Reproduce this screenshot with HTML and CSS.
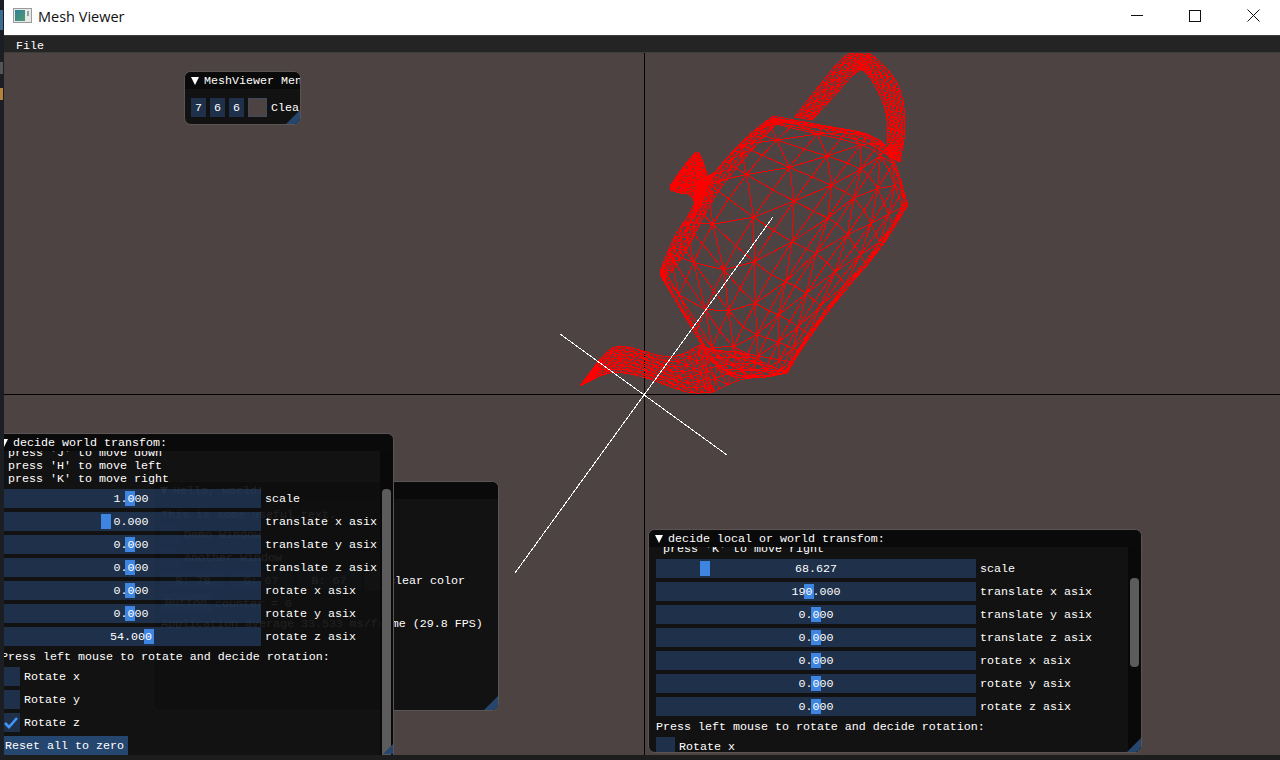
FILE: index.html
```html
<!DOCTYPE html>
<html lang="en">
<head>
    <meta charset="UTF-8">
    <title>Mesh Viewer</title>
    <link rel="stylesheet" href="styles.css">
</head>
<body>
    <div class="desktop-strip">
        <span class="strip-blue"></span>
        <span class="strip-gray"></span>
        <span class="strip-orange"></span>
    </div>

    <div class="app">
        <header class="titlebar">
            <svg class="app-icon" width="19" height="15" viewBox="0 0 19 15">
                <defs>
                    <linearGradient id="icon-fill" x1="0" y1="0" x2="1" y2="1">
                        <stop offset="0" stop-color="#2f7f9c"/>
                        <stop offset="1" stop-color="#4f9a6e"/>
                    </linearGradient>
                </defs>
                <rect x="0.5" y="0.5" width="18" height="14" fill="#e8e8e8" stroke="#9a9a9a"/>
                <rect x="2" y="2" width="10" height="11" fill="url(#icon-fill)"/>
                <rect x="14" y="3" width="2" height="5" fill="#8fa5a0"/>
            </svg>
            <span class="app-title">Mesh Viewer</span>
            <div class="window-controls">
                <svg width="12" height="12" viewBox="0 0 12 12"><path d="M0 5.5H12" stroke="#111"/></svg>
                <svg width="12" height="12" viewBox="0 0 12 12"><rect x="0.5" y="0.5" width="11" height="11" fill="none" stroke="#111"/></svg>
                <svg width="13" height="13" viewBox="0 0 13 13"><path d="M0.5 0.5L12.5 12.5M12.5 0.5L0.5 12.5" stroke="#111"/></svg>
            </div>
        </header>

        <nav class="menubar"><span>File</span></nav>

        <main class="canvas">
            <svg class="scene" id="scene" width="1276" height="702" viewBox="4 53 1276 702">
                <path d="M644.5 53V755M4 394.5H1280" stroke="#000" fill="none"/>
                <path id="mesh" d="" stroke="#ff0000" fill="none"/>
                <path d="M773 217L515 573M560 334L727 455" stroke="#fff" fill="none"/>
            </svg>

            <section class="window window-menu">
                <div class="win-title"><i class="arrow"></i><span class="win-label">MeshViewer Menu</span></div>
                <div class="swatch-row">
                    <span class="frame small"><span>7</span></span>
                    <span class="frame small"><span>6</span></span>
                    <span class="frame small"><span>6</span></span>
                    <span class="color-box"></span>
                    <span class="nudge">Clear color</span>
                </div>
                <i class="grip"></i>
            </section>

            <section class="window window-hello">
                <div class="win-title"><i class="arrow"></i><span class="win-label">Hello, world!</span></div>
                <div class="win-body hello-body">
                    <p>This is some useful text.</p>
                    <div class="check-row"><span class="check"></span><span>Demo Window</span></div>
                    <div class="check-row"><span class="check"></span><span>Another Window</span></div>
                    <div class="slider-row">
                        <span class="frame color-part"><span>R: 78</span></span>
                        <span class="frame color-part"><span>G: 67</span></span>
                        <span class="frame color-part"><span>B: 67</span></span>
                        <span class="color-box"></span>
                        <label>clear color</label>
                    </div>
                    <div class="check-row"><span class="plain-button">Button</span><span>counter = 0</span></div>
                    <p>Application average 33.533 ms/frame (29.8 FPS)</p>
                </div>
                <i class="grip"></i>
            </section>

            <section class="window window-world">
                <div class="win-title"><i class="arrow"></i><span class="win-label">decide world transfom:</span></div>
                <div class="win-body">
                    <pre class="help-text"> press 'J' to move down
 press 'H' to move left
 press 'K' to move right</pre>
                    <div class="slider-row"><div class="slider"><i class="grab" style="left: 124px"></i><span>1.000</span></div><label>scale</label></div>
                    <div class="slider-row"><div class="slider"><i class="grab" style="left: 100px"></i><span>0.000</span></div><label>translate x asix</label></div>
                    <div class="slider-row"><div class="slider"><i class="grab" style="left: 124px"></i><span>0.000</span></div><label>translate y asix</label></div>
                    <div class="slider-row"><div class="slider"><i class="grab" style="left: 124px"></i><span>0.000</span></div><label>translate z asix</label></div>
                    <div class="slider-row"><div class="slider"><i class="grab" style="left: 124px"></i><span>0.000</span></div><label>rotate x asix</label></div>
                    <div class="slider-row"><div class="slider"><i class="grab" style="left: 124px"></i><span>0.000</span></div><label>rotate y asix</label></div>
                    <div class="slider-row"><div class="slider"><i class="grab" style="left: 143px"></i><span>54.000</span></div><label>rotate z asix</label></div>
                    <p>Press left mouse to rotate and decide rotation:</p>
                    <div class="check-row"><span class="check"></span><span>Rotate x</span></div>
                    <div class="check-row"><span class="check"></span><span>Rotate y</span></div>
                    <div class="check-row">
                        <span class="check">
                            <svg width="19" height="19" viewBox="0 0 19 19"><path d="M4 10L8 14L16 5" fill="none" stroke="#4296fa" stroke-width="2.6"/></svg>
                        </span>
                        <span>Rotate z</span>
                    </div>
                    <div class="reset-button"><span>Reset all to zero</span></div>
                </div>
                <div class="scroll-track"><i class="scroll-thumb"></i></div>
                <i class="grip"></i>
            </section>

            <section class="window window-local">
                <div class="win-title"><i class="arrow"></i><span class="win-label">decide local or world transfom:</span></div>
                <div class="win-body">
                    <pre class="help-text"> press 'K' to move right</pre>
                    <div class="slider-row"><div class="slider"><i class="grab" style="left: 44px"></i><span>68.627</span></div><label>scale</label></div>
                    <div class="slider-row"><div class="slider"><i class="grab" style="left: 148px"></i><span>190.000</span></div><label>translate x asix</label></div>
                    <div class="slider-row"><div class="slider"><i class="grab" style="left: 155px"></i><span>0.000</span></div><label>translate y asix</label></div>
                    <div class="slider-row"><div class="slider"><i class="grab" style="left: 155px"></i><span>0.000</span></div><label>translate z asix</label></div>
                    <div class="slider-row"><div class="slider"><i class="grab" style="left: 155px"></i><span>0.000</span></div><label>rotate x asix</label></div>
                    <div class="slider-row"><div class="slider"><i class="grab" style="left: 155px"></i><span>0.000</span></div><label>rotate y asix</label></div>
                    <div class="slider-row"><div class="slider"><i class="grab" style="left: 155px"></i><span>0.000</span></div><label>rotate z asix</label></div>
                    <p>Press left mouse to rotate and decide rotation:</p>
                    <div class="check-row"><span class="check"></span><span>Rotate x</span></div>
                </div>
                <div class="scroll-track"><i class="scroll-thumb"></i></div>
                <i class="grip"></i>
            </section>
        </main>
    </div>

    <script src="teapot.js"></script>
</body>
</html>
```

FILE: styles.css
```css
* {
    box-sizing: border-box;
}

html, body {
    height: 100%;
}

body {
    margin: 0;
    display: flex;
    overflow: hidden;
    background-color: #1d1d1d;
    color: #fff;
    font-family: "Liberation Mono", monospace;
    font-size: 11.67px;
    line-height: 13px;
}

p, pre {
    margin: 0;
    font: inherit;
    white-space: pre;
}

/* liberation mono sits a pixel higher than the imgui font */
p, label, .nudge, .win-label, .menubar span, .slider span, .frame span,
.check-row > span:last-child, .reset-button span {
    transform: translateY(1px);
}

/* bit of the desktop behind the window */
.desktop-strip {
    flex: 0 0 4px;
    display: flex;
    flex-direction: column;
    background-color: #1b1f24;
}

.desktop-strip span {
    display: block;
    width: 3px;
}

.strip-blue {
    height: 20px;
    margin-top: 10px;
    background-color: #3d6c92;
}

.strip-gray {
    height: 12px;
    margin-top: 32px;
    background-color: #555;
}

.strip-orange {
    height: 12px;
    margin-top: 14px;
    background-color: #b5813c;
}

.app {
    flex: 1;
    display: flex;
    flex-direction: column;
    min-width: 0;
}

.titlebar {
    flex: 0 0 35px;
    display: flex;
    align-items: center;
    padding: 0 0 4px 9px;
    background-color: #fff;
    color: #111;
}

.app-title {
    margin: 2px 0 0 6px;
    font-family: "Open Sans", sans-serif;
    font-size: 14.5px;
}

.window-controls {
    display: flex;
    align-items: center;
    gap: 46px;
    margin-left: auto;
    padding-right: 20px;
}

.menubar {
    flex: 0 0 18px;
    padding: 3px 0 0 12px;
    background-color: #242424;
    border-top: 1px solid #3c3c3c;
    border-bottom: 1px solid #3c3c3c;
}

.menubar span {
    display: block;
}

.canvas {
    position: relative;
    flex: 0 0 702px;
    overflow: hidden;
    background-color: #4e4343;
}

.scene {
    position: absolute;
    top: 0;
    left: 0;
    shape-rendering: crispEdges;
}

/* imgui style windows, placed freely over the viewport */
.window {
    position: absolute;
    overflow: hidden;
    background-color: rgba(15, 15, 15, 0.93);
    border: 1px solid #5a5454;
    border-radius: 7px;
}

.window-menu {
    left: 180px;
    top: 18px;
    width: 117px;
    height: 54px;
}

.window-hello {
    left: 149px;
    top: 428px;
    width: 346px;
    height: 230px;
}

.window-world {
    left: -11px;
    top: 380px;
    width: 401px;
    height: 340px;
}

.window-local {
    left: 644px;
    top: 476px;
    width: 494px;
    height: 224px;
}

.win-title {
    display: flex;
    align-items: center;
    height: 17px;
    background-color: #0a0a0a;
    white-space: nowrap;
}

.arrow {
    flex: none;
    width: 0;
    height: 0;
    margin-left: 6px;
    border-left: 4.5px solid transparent;
    border-right: 4.5px solid transparent;
    border-top: 8px solid #fff;
}

.win-label {
    margin-left: 5px;
}

.win-body {
    display: flex;
    flex-direction: column;
    gap: 4px;
    height: 100%;
    padding-left: 7px;
    overflow: hidden;
}

.hello-body {
    padding-top: 9px;
}

.help-text {
    flex: none;
    margin-top: -4px;
    margin-bottom: -1px;
}

.slider-row, .check-row {
    flex: none;
    display: flex;
    align-items: center;
    gap: 4px;
    height: 19px;
}

.slider {
    position: relative;
    display: flex;
    align-items: center;
    justify-content: center;
    height: 19px;
    background-color: rgba(41, 74, 122, 0.54);
}

.window-world .slider {
    flex: 0 0 260px;
}

.window-local .slider {
    flex: 0 0 320px;
}

.grab {
    position: absolute;
    top: 2px;
    width: 10px;
    height: 15px;
    background-color: #3d85e0;
}

.check {
    flex: 0 0 19px;
    height: 19px;
    background-color: rgba(41, 74, 122, 0.54);
}

.check svg {
    display: block;
}

.frame {
    display: flex;
    align-items: center;
    justify-content: center;
    height: 19px;
    background-color: rgba(41, 74, 122, 0.54);
}

.frame.small {
    flex: 0 0 15px;
}

.color-part {
    flex: 0 0 64px;
}

.color-box {
    flex: 0 0 19px;
    height: 19px;
    background-color: #4e4343;
    outline: 1px solid #3f4a5c;
    outline-offset: -1px;
}

.plain-button {
    display: flex;
    align-items: center;
    height: 19px;
    padding: 0 4px;
    background-color: rgba(66, 150, 250, 0.4);
}

.reset-button {
    flex: none;
    align-self: flex-start;
    height: 19px;
    padding: 3px 4px 0;
    background-color: rgba(66, 150, 250, 0.4);
}

.reset-button span {
    display: block;
}

.swatch-row {
    display: flex;
    align-items: center;
    gap: 4px;
    height: 19px;
    margin-top: 9px;
    padding-left: 6px;
    white-space: nowrap;
}

.scroll-track {
    position: absolute;
    top: 17px;
    right: 0;
    bottom: 0;
    width: 13px;
    background-color: #090909;
}

.scroll-thumb {
    position: absolute;
    left: 2px;
    width: 9px;
    background-color: #5c5c5c;
    border-radius: 4px;
}

.window-world .scroll-thumb {
    top: 38px;
    height: 300px;
}

.window-local .scroll-thumb {
    top: 31px;
    height: 89px;
}

.grip {
    position: absolute;
    right: 0;
    bottom: 0;
    width: 14px;
    height: 14px;
    background-color: #26466e;
    clip-path: polygon(100% 0, 100% 100%, 0 100%);
}

/* this window runs off the bottom of the viewport */
.window-world .grip {
    bottom: 18px;
    width: 10px;
    height: 10px;
}
```

FILE: teapot.js
```js
// builds the red wireframe, all coordinates are page pixels
let d = "";

function line(a, b) {
    d += `M${a[0].toFixed(1)} ${a[1].toFixed(1)}L${b[0].toFixed(1)} ${b[1].toFixed(1)}`;
}

function lerp(a, b, t) {
    return [a[0] + (b[0] - a[0]) * t, a[1] + (b[1] - a[1]) * t];
}

// catmull-rom through the points, n steps in total
function curve(pts, n) {
    const out = [];
    const segs = pts.length - 1;
    for (let i = 0; i <= n; i++) {
        const f = i / n * segs;
        const k = Math.min(Math.floor(f), segs - 1);
        const t = f - k;
        const p0 = pts[Math.max(k - 1, 0)];
        const p1 = pts[k];
        const p2 = pts[k + 1];
        const p3 = pts[Math.min(k + 2, segs)];
        const c = [0, 1].map(j => 0.5 * (2 * p1[j] + (p2[j] - p0[j]) * t
            + (2 * p0[j] - 5 * p1[j] + 4 * p2[j] - p3[j]) * t * t
            + (3 * p1[j] - p0[j] - 3 * p2[j] + p3[j]) * t * t * t));
        out.push(c);
    }
    return out;
}

function grid(at, nu, nv) {
    for (let i = 0; i <= nu; i++) {
        for (let j = 0; j <= nv; j++) {
            if (i < nu) line(at(i, j), at(i + 1, j));
            if (j < nv) line(at(i, j), at(i, j + 1));
            if (i < nu && j < nv) {
                if ((i + j) % 2 === 0) line(at(i, j), at(i + 1, j + 1));
                else line(at(i + 1, j), at(i, j + 1));
            }
        }
    }
}

function tube(a, b, nu, nv) {
    const ca = curve(a, nu);
    const cb = curve(b, nu);
    grid((i, j) => lerp(ca[i], cb[i], j / nv), nu, nv);
}

function body() {
    const nu = 12;
    const nv = 13;
    const fine = 60;
    const top = curve([[773, 118], [820, 126], [867, 135], [890, 152], [908, 205]], fine);
    const bottom = curve([[660, 274], [693, 330], [722, 372], [755, 378], [787, 373]], fine);
    const left = curve([[773, 118], [735, 150], [700, 195], [680, 232], [660, 274]], fine);
    const right = curve([[908, 205], [877, 253], [837, 300], [803, 347], [787, 373]], fine);
    const su = u => Math.sin(u * Math.PI / 2);
    const sv = v => (1 - Math.cos(v * Math.PI)) / 2;

    grid((i, j) => {
        const u = su(i / nu);
        const v = sv(j / nv);
        const iu = Math.round(u * fine);
        const iv = Math.round(v * fine);
        const c = lerp(left[iv], right[iv], u);
        const e = lerp(top[iu], bottom[iu], v);
        const b = lerp(lerp(top[0], top[fine], u), lerp(bottom[0], bottom[fine], u), v);
        return [c[0] + e[0] - b[0], c[1] + e[1] - b[1]];
    }, nu, nv);
}

body();

// handle
tube([[795, 117], [820, 85], [847, 55], [870, 54], [898, 85], [905, 125], [900, 162]],
     [[812, 120], [835, 95], [857, 72], [868, 75], [885, 108], [888, 145], [892, 158]], 38, 5);

// thick edge of the opening
tube([[773, 116], [745, 139], [713, 175], [697, 204], [675, 236], [660, 272]],
     [[779, 122], [758, 143], [722, 186], [702, 220], [683, 256], [663, 281]], 30, 3);
tube([[773, 116], [820, 125], [867, 134], [890, 150]],
     [[771, 122], [820, 132], [865, 142], [890, 157]], 12, 1);

// knob on the far side
tube([[670, 186], [685, 165], [697, 152], [703, 162], [708, 175], [716, 171]],
     [[670, 190], [680, 193], [688, 194], [695, 205], [690, 222], [684, 236]], 22, 7);

// spout
tube([[580, 386], [607, 352], [627, 347], [670, 357], [700, 345]],
     [[580, 386], [610, 373], [643, 377], [687, 392], [713, 392]], 24, 7);
tube([[700, 345], [715, 350], [740, 352]],
     [[713, 392], [743, 379], [787, 373]], 7, 4);

document.getElementById("mesh").setAttribute("d", d);
```
